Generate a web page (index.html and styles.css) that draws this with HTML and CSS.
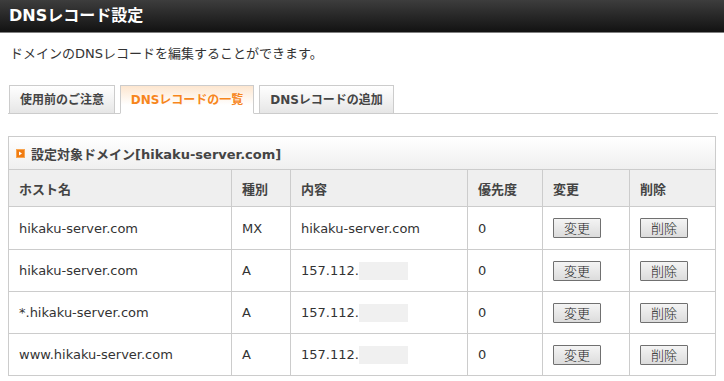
FILE: index.html
```html
<!DOCTYPE html>
<html lang="ja">
<head>
  <meta charset="UTF-8" />
  <title>DNSレコード設定</title>
  <link rel="stylesheet" href="styles.css">
</head>
<body>

  <div class="page-head">
    <h1>DNSレコード設定</h1>
  </div>

  <div class="content">
    <p class="lead">ドメインのDNSレコードを編集することができます。</p>

    <ul class="tabs">
      <li class="tab tab-notes">使用前のご注意</li>
      <li class="tab tab-list active">DNSレコードの一覧</li>
      <li class="tab tab-add">DNSレコードの追加</li>
    </ul>

    <div class="panel">
      <div class="panel-title">
        <svg class="mark" width="9" height="9" viewBox="0 0 9 9">
          <rect x="0" y="0" width="9" height="9" fill="#f07c12" />
          <rect x="0.5" y="0.5" width="8" height="8" fill="none" stroke="#f8a550" stroke-width="1" />
          <path d="M3 2.5 L6 4.5 L3 6.5 Z" fill="#fff" />
        </svg>
        設定対象ドメイン[hikaku-server.com]
      </div>

      <table class="records">
        <thead>
          <tr>
            <th class="c-host">ホスト名</th>
            <th class="c-type">種別</th>
            <th class="c-data">内容</th>
            <th class="c-prio">優先度</th>
            <th class="c-edit">変更</th>
            <th class="c-del">削除</th>
          </tr>
        </thead>
        <tbody>
          <tr>
            <td>hikaku-server.com</td>
            <td>MX</td>
            <td>hikaku-server.com</td>
            <td>0</td>
            <td><button class="btn">変更</button></td>
            <td><button class="btn">削除</button></td>
          </tr>
          <tr>
            <td>hikaku-server.com</td>
            <td>A</td>
            <td>157.112.<span class="masked"></span></td>
            <td>0</td>
            <td><button class="btn">変更</button></td>
            <td><button class="btn">削除</button></td>
          </tr>
          <tr>
            <td>*.hikaku-server.com</td>
            <td>A</td>
            <td>157.112.<span class="masked"></span></td>
            <td>0</td>
            <td><button class="btn">変更</button></td>
            <td><button class="btn">削除</button></td>
          </tr>
          <tr>
            <td>www.hikaku-server.com</td>
            <td>A</td>
            <td>157.112.<span class="masked"></span></td>
            <td>0</td>
            <td><button class="btn">変更</button></td>
            <td><button class="btn">削除</button></td>
          </tr>
        </tbody>
      </table>
    </div>
  </div>

</body>
</html>
```

FILE: styles.css
```css
* {
  box-sizing: border-box;
}

body {
  margin: 0;
  background: #fff;
  color: #333;
  font-family: "DejaVu Sans", "Noto Sans CJK JP", sans-serif;
  font-size: 13px;
}

.page-head {
  height: 33px;
  background: linear-gradient(#3d3d3d, #121212);
  border-bottom: 1px solid #808080;
  padding: 0 9px;
}

.page-head h1 {
  margin: 0;
  color: #fff;
  font-size: 16px;
  font-weight: bold;
  line-height: 31px;
}

.content {
  padding: 0 6px 0 8px;
}

.lead {
  margin: 0;
  padding: 12px 2px 0;
  height: 52px;
  line-height: 18px;
}

/* tabs */
.tabs {
  list-style: none;
  margin: 0 0 22px;
  padding: 0 0 0 1px;
  display: flex;
  border-bottom: 1px solid #ccc;
}

.tab {
  height: 29px;
  margin-bottom: -1px;
  margin-right: 5px;
  border: 1px solid #ccc;
  background: linear-gradient(#ffffff, #e6e6e6);
  color: #444;
  font-size: 12px;
  font-weight: bold;
  line-height: 28px;
  text-align: center;
  white-space: nowrap;
}

.tab-notes { width: 106px; }
.tab-list { width: 134px; }
.tab-add { width: 135px; }

.tab.active {
  color: #f7861c;
  background: linear-gradient(#fde6cf, #ffffff 70%);
  border-bottom-color: #fff;
}

/* panel */
.panel {
  width: 708px;
}

.panel-title {
  height: 33px;
  border: 1px solid #ccc;
  border-bottom: none;
  background: linear-gradient(#ffffff, #efefef);
  padding-left: 7px;
  display: flex;
  align-items: center;
  gap: 6px;
  color: #444;
  font-weight: bold;
}

.records {
  width: 708px;
  border-collapse: collapse;
  table-layout: fixed;
}

.records th,
.records td {
  border: 1px solid #ccc;
  padding: 0 10px;
  text-align: left;
  vertical-align: middle;
}

.records th {
  height: 37px;
  background: #efefef;
  color: #444;
  font-weight: bold;
}

.records td {
  height: 42px;
}

.records tbody tr:first-child td {
  height: 43px;
}

.c-host { width: 223px; }
.c-type { width: 59px; }
.c-data { width: 177px; }
.c-prio { width: 75px; }
.c-edit { width: 87px; }
.c-del  { width: 86px; }

.masked {
  display: inline-block;
  width: 49px;
  height: 18px;
  background: #f0f0f0;
  vertical-align: middle;
}

.btn {
  width: 48px;
  height: 20px;
  padding: 0;
  border: 1px solid #707070;
  border-radius: 1px;
  background: linear-gradient(#f4f4f4, #dcdcdc);
  color: #222;
  font-family: "Noto Sans CJK JP", sans-serif;
  font-size: 13px;
  font-weight: 300;
  line-height: 18px;
  vertical-align: middle;
}
```
